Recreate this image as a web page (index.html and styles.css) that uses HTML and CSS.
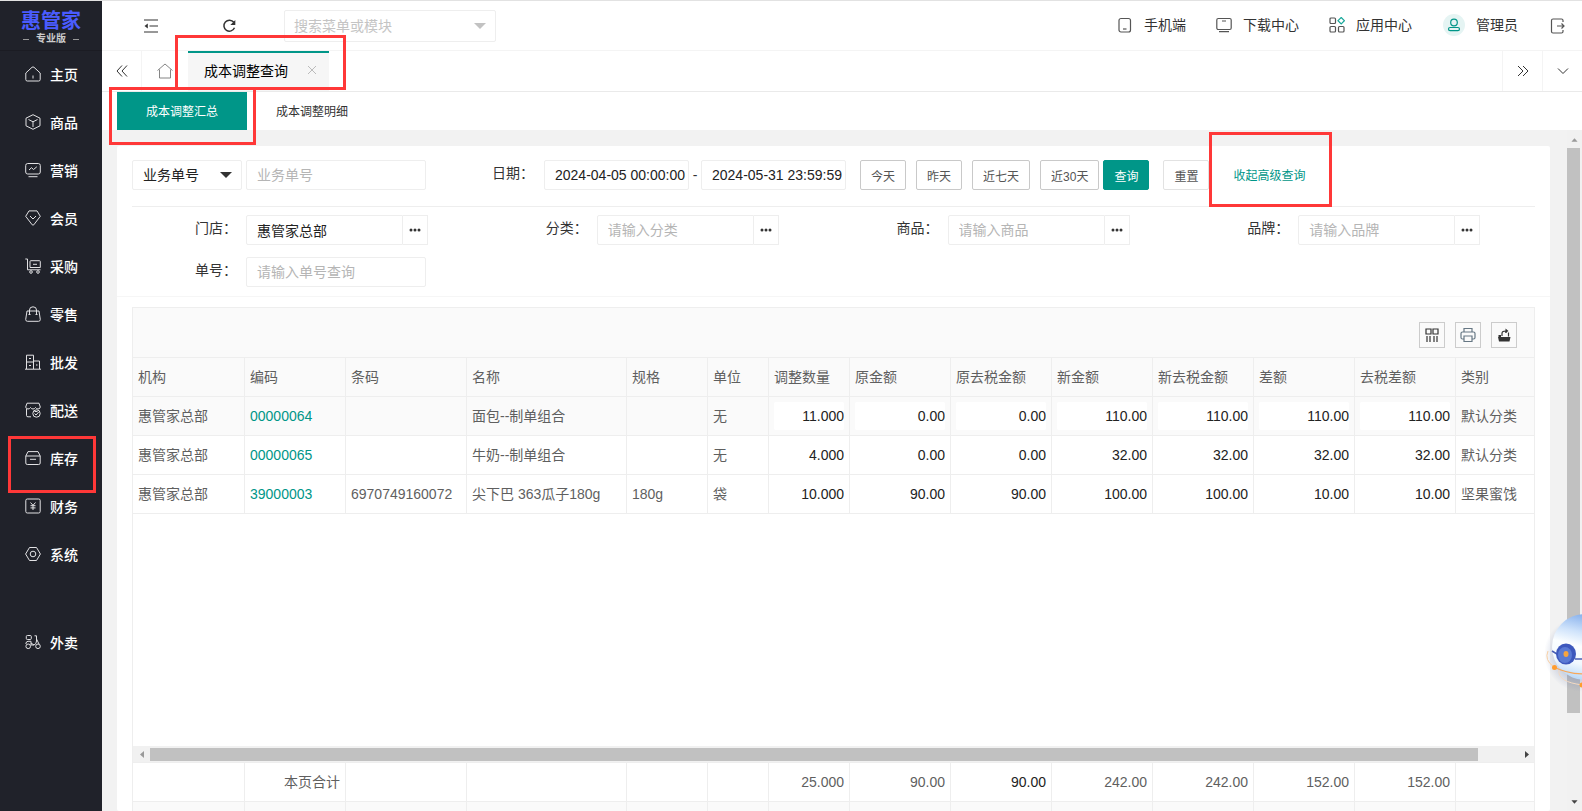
FILE: index.html
```html
<!DOCTYPE html>
<html lang="zh-CN">
<head>
<meta charset="utf-8">
<title>成本调整查询</title>
<link rel="stylesheet" href="styles.css">
</head>
<body>
<div class="app">
  <aside class="sidebar">
    <div class="logo">
      <div class="logo-name">惠管家</div>
      <div class="logo-edition"><i></i><span>专业版</span><i></i></div>
    </div>
    <nav class="menu">
      <a href="#"><svg viewBox="0 0 16 16"><path d="M.8 7 7 1.300Q8 .5 9 1.300L15.200 7V13.500Q15.200 15 13.700 15H2.300Q.8 15 .8 13.500ZM8 9.500V12.500"/></svg>主页</a>
      <a href="#"><svg viewBox="0 0 16 16"><path d="M8 .7 15 4.200V11.800L8 15.300 1 11.800V4.200ZM3.500 5.500 8 7.800 12.500 5.500M8 7.800V13"/></svg>商品</a>
      <a href="#"><svg viewBox="0 0 16 16"><rect x=".7" y="1.500" width="14.600" height="10.500" rx="2"/><path d="M4 8 6.500 5.700 8.500 7.500 11.800 4.800M3.500 14.700H12.500"/></svg>营销</a>
      <a href="#"><svg viewBox="0 0 16 16"><path d="M4 .9H12L15.300 6.300 8.800 14.800Q8 15.500 7.200 14.800L.7 6.300ZM5 6 8 9 11 6"/></svg>会员</a>
      <a href="#"><svg viewBox="0 0 16 16"><path d="M.3 1H2.500V11.800H15.500M5 3.500Q5 2.700 5.800 2.700H14.500Q15.300 2.700 15.300 3.500V9.500H5ZM8 6.300H12"/><circle cx="6" cy="14" r="1.300"/><circle cx="13" cy="14" r="1.300"/></svg>采购</a>
      <a href="#"><svg viewBox="0 0 16 16"><path d="M2 5H14L15.300 13.500Q15.300 15.300 13.500 15.300H2.500Q.7 15.300 .7 13.500ZM4.500 8.500V4Q4.500 .8 8 .8 11.500 .8 11.500 4V8.500M3.500 8.500H5.500M10.500 8.500H12.500"/></svg>零售</a>
      <a href="#"><svg viewBox="0 0 16 16"><path d="M1.500 15V1.200H8.500V15M8.500 7H14.500V15M0 15.200H16M4 4.500H6M1.500 8H8.500M4 11.500H6M11 11H12.500"/></svg>批发</a>
      <a href="#"><svg viewBox="0 0 16 16"><path d="M1.500 7V13.500Q1.500 14.800 3 14.800H6M14.500 7V6.500M2 1.200H14L15.300 5Q15 7 13 7 11.500 7 10.500 5.500 9.500 7 8 7 6.500 7 5.500 5.500 4.500 7 3 7 1 7 .7 5Z"/><circle cx="11.500" cy="11.500" r="3.700"/><path d="M9.500 11.500 11 13 13.700 10M9.500 9.500H12.500"/></svg>配送</a>
      <a href="#"><svg viewBox="0 0 16 16"><path d="M.8 6V13Q.8 14.500 2.300 14.500H13.700Q15.200 14.500 15.200 13V6ZM.8 6 3 1.600H13L15.200 6M5 9.300H11"/></svg>库存</a>
      <a href="#"><svg viewBox="0 0 16 16"><rect x=".8" y="1" width="14.400" height="14" rx="1.500"/><path d="M5.500 4.500 8 7.300 10.500 4.500M8 7.300V12M5.500 7.700H10.500M5.500 9.900H10.500"/></svg>财务</a>
      <a href="#"><svg viewBox="0 0 16 16"><path d="M4.500 1.500H11.500L15.400 8 11.500 14.500H4.500L.6 8Z"/><circle cx="8" cy="8" r="2.800"/></svg>系统</a>
      <a href="#" class="menu-apart"><svg viewBox="0 0 16 16"><rect x="1.300" y="1.500" width="5" height="4" rx="1"/><path d="M.8 10Q1 7.300 3 7.300H6V11H9Q11.500 10 11.500 7V1.800H9.500M6 9 9 11M11.500 5 14 10"/><circle cx="3.200" cy="12.300" r="2.300"/><circle cx="13" cy="12.300" r="2.300"/></svg>外卖</a>
    </nav>
  </aside>

  <div class="main">
    <header class="topbar">
      <button class="icon-btn top-fold" aria-label="折叠菜单"><svg class="ic dark" viewBox="0 0 16 16"><path d="M1 2H15M6.500 8H15M1 14H15"/><path class="solid" d="M4.800 5.500V10.500L1.500 8Z"/></svg></button>
      <button class="icon-btn top-refresh" aria-label="刷新"><svg class="ic dark" viewBox="0 0 16 16"><path stroke-width="1.500" d="M12.800 4.300A5.500 5.500 0 1 0 13.500 9.800"/><path class="solid" d="M14.300 2V7H9.300Z"/></svg></button>
      <div class="select-wrap search">
        <select aria-label="搜索菜单或模块"><option>搜索菜单或模块</option></select>
        <svg class="caret" viewBox="0 0 12 6"><path d="M0 0H12L6 6Z"/></svg>
      </div>
      <nav class="top-links">
        <a href="#"><svg class="ic" viewBox="0 0 16 16"><rect x="2" y="1.500" width="11.500" height="13.500" rx="2"/><path d="M6 12H9.500"/></svg>手机端</a>
        <a href="#"><svg class="ic" viewBox="0 0 16 16"><rect x=".8" y="1.500" width="14.400" height="11" rx="1.500"/><path d="M6 4H10M3 14.600H13"/></svg>下载中心</a>
        <a href="#"><svg class="ic" viewBox="0 0 16 16"><rect x="1" y="1" width="5.500" height="5.500" rx="1"/><rect x="1" y="9.500" width="5.500" height="5.500" rx="1"/><rect x="9.500" y="9.500" width="5.500" height="5.500" rx="1"/><path class="teal" d="M12.200 .5 15.400 3.700 12.200 6.900 9 3.700Z"/></svg>应用中心</a>
        <a href="#" class="user"><svg class="avatar" viewBox="0 0 22 22"><circle class="disc" cx="11" cy="11" r="11"/><circle cx="11" cy="8.500" r="3.300"/><rect x="5.500" y="13.500" width="11" height="3.200" rx="1.600"/></svg>管理员</a>
        <button class="icon-btn" aria-label="退出"><svg class="ic" viewBox="0 0 16 16"><path d="M13 4V2.500Q13 1 11.500 1H3Q1.500 1 1.500 2.500V13.500Q1.500 15 3 15H11.500Q13 15 13 13.500V12M7 8H13.500M11.500 5.500 14 8 11.500 10.500"/></svg></button>
      </nav>
    </header>

    <div class="tabs">
      <button class="tab-ctl tab-prev" aria-label="向左"><svg class="ic dark" viewBox="0 0 16 16"><path d="M8 2.500 3 8 8 13.500M13 2.500 8 8 13 13.500"/></svg></button>
      <button class="tab-home" aria-label="主页"><svg viewBox="0 0 16 16"><path d="M.5 7.500 8 1 15.500 7.500M2.500 6.500V15H13.500V6.500"/></svg></button>
      <div class="tab-active"><span>成本调整查询</span><button aria-label="关闭"><svg viewBox="0 0 10 10"><path d="M1 1 9 9M9 1 1 9"/></svg></button></div>
      <div class="spacer"></div>
      <button class="tab-ctl" aria-label="向右"><svg class="ic dark" viewBox="0 0 16 16"><path d="M3 3 8 8 3 13M8 3 13 8 8 13"/></svg></button>
      <button class="tab-ctl" aria-label="更多"><svg class="ic dark" viewBox="0 0 16 16"><path d="M3 5.500 8 10.500 13 5.500"/></svg></button>
    </div>

    <div class="subtabs">
      <button class="on">成本调整汇总</button>
      <button>成本调整明细</button>
    </div>

    <div class="body">
      <section class="card">
        <form class="filters">
          <div class="row-main">
            <div class="select-wrap kind">
              <select aria-label="查询类型"><option>业务单号</option></select>
              <svg class="caret" viewBox="0 0 12 6"><path d="M0 0H12L6 6Z"/></svg>
            </div>
            <input class="field bill" aria-label="业务单号" placeholder="业务单号">
            <label class="date-label" for="from">日期：</label>
            <input class="field date" id="from" value="2024-04-05 00:00:00">
            <span class="dash">-</span>
            <input class="field date" aria-label="结束日期" value="2024-05-31 23:59:59">
            <div class="quick">
              <button type="button">今天</button>
              <button type="button">昨天</button>
              <button type="button">近七天</button>
              <button type="button">近30天</button>
            </div>
            <button type="button" class="primary">查询</button>
            <button type="button" class="reset">重置</button>
            <a href="#" class="collapse">收起高级查询</a>
          </div>
          <div class="row-more">
            <div class="item"><label for="shop">门店：</label><input class="field" id="shop" value="惠管家总部"><button type="button" aria-label="选择门店"><svg viewBox="0 0 12 4"><circle cx="2" cy="2" r="1.500"/><circle cx="6" cy="2" r="1.500"/><circle cx="10" cy="2" r="1.500"/></svg></button></div>
            <div class="item"><label for="cat">分类：</label><input class="field" id="cat" placeholder="请输入分类"><button type="button" aria-label="选择分类"><svg viewBox="0 0 12 4"><circle cx="2" cy="2" r="1.500"/><circle cx="6" cy="2" r="1.500"/><circle cx="10" cy="2" r="1.500"/></svg></button></div>
            <div class="item"><label for="goods">商品：</label><input class="field" id="goods" placeholder="请输入商品"><button type="button" aria-label="选择商品"><svg viewBox="0 0 12 4"><circle cx="2" cy="2" r="1.500"/><circle cx="6" cy="2" r="1.500"/><circle cx="10" cy="2" r="1.500"/></svg></button></div>
            <div class="item"><label for="brand">品牌：</label><input class="field" id="brand" placeholder="请输入品牌"><button type="button" aria-label="选择品牌"><svg viewBox="0 0 12 4"><circle cx="2" cy="2" r="1.500"/><circle cx="6" cy="2" r="1.500"/><circle cx="10" cy="2" r="1.500"/></svg></button></div>
            <div class="item"><label for="no">单号：</label><input class="field bill" id="no" placeholder="请输入单号查询"></div>
          </div>
        </form>

        <div class="grid">
          <div class="toolbar">
            <button aria-label="筛选列"><svg class="ic dark" viewBox="0 0 16 16"><path d="M2 2H7V7H2ZM9 2H14V7H9ZM3 9V15M6 9V15M10 9V15M13 9V15"/></svg></button>
            <button aria-label="打印"><svg class="ic print" viewBox="0 0 16 16"><path d="M4 5V1.500H12V5M4 12H2.500Q1 12 1 10.500V6.500Q1 5 2.500 5H13.500Q15 5 15 6.500V10.500Q15 12 13.500 12H12M4 9H12V14.500H4Z"/></svg></button>
            <button aria-label="导出"><svg class="ic dark" viewBox="0 0 16 16"><path d="M6 9V6.500Q6 4 10 4V6M12.500 5.500V9.500"/><path class="solid" d="M9.500 1.500 12.500 4 9.500 6ZM2 10H14.500L13.500 14.500H3ZM2.500 8H5V10H2.500Z"/></svg></button>
          </div>
          <table>
            <colgroup><col class="w112"><col class="w101"><col class="w121"><col class="w160"><col class="w81"><col class="w61"><col class="w81"><col class="w101"><col class="w101"><col class="w101"><col class="w101"><col class="w101"><col class="w101"><col></colgroup>
            <thead>
              <tr><th>机构</th><th>编码</th><th>条码</th><th>名称</th><th>规格</th><th>单位</th><th>调整数量</th><th>原金额</th><th>原去税金额</th><th>新金额</th><th>新去税金额</th><th>差额</th><th>去税差额</th><th>类别</th></tr>
            </thead>
            <tbody>
              <tr class="hover"><td>惠管家总部</td><td><a href="#">00000064</a></td><td></td><td>面包--制单组合</td><td></td><td>无</td><td><input aria-label="调整数量" value="11.000"></td><td><input aria-label="原金额" value="0.00"></td><td><input aria-label="原去税金额" value="0.00"></td><td><input aria-label="新金额" value="110.00"></td><td><input aria-label="新去税金额" value="110.00"></td><td><input aria-label="差额" value="110.00"></td><td><input aria-label="去税差额" value="110.00"></td><td>默认分类</td></tr>
              <tr><td>惠管家总部</td><td><a href="#">00000065</a></td><td></td><td>牛奶--制单组合</td><td></td><td>无</td><td><input aria-label="调整数量" value="4.000"></td><td><input aria-label="原金额" value="0.00"></td><td><input aria-label="原去税金额" value="0.00"></td><td><input aria-label="新金额" value="32.00"></td><td><input aria-label="新去税金额" value="32.00"></td><td><input aria-label="差额" value="32.00"></td><td><input aria-label="去税差额" value="32.00"></td><td>默认分类</td></tr>
              <tr><td>惠管家总部</td><td><a href="#">39000003</a></td><td>6970749160072</td><td>尖下巴 363瓜子180g</td><td>180g</td><td>袋</td><td><input aria-label="调整数量" value="10.000"></td><td><input aria-label="原金额" value="90.00"></td><td><input aria-label="原去税金额" value="90.00"></td><td><input aria-label="新金额" value="100.00"></td><td><input aria-label="新去税金额" value="100.00"></td><td><input aria-label="差额" value="10.00"></td><td><input aria-label="去税差额" value="10.00"></td><td>坚果蜜饯</td></tr>
            </tbody>
          </table>
          <div class="blank"></div>
          <div class="hscroll">
            <svg class="off" viewBox="0 0 17 17"><path d="M11 5V12L7 8.500Z"/></svg>
            <div class="hthumb"></div>
            <svg viewBox="0 0 17 17"><path d="M8 5V12L12 8.500Z"/></svg>
          </div>
          <table class="totals">
            <colgroup><col class="w112"><col class="w101"><col class="w121"><col class="w160"><col class="w81"><col class="w61"><col class="w81"><col class="w101"><col class="w101"><col class="w101"><col class="w101"><col class="w101"><col class="w101"><col></colgroup>
            <tbody>
              <tr><td></td><td>本页合计</td><td></td><td></td><td></td><td></td><td>25.000</td><td>90.00</td><td class="strong">90.00</td><td>242.00</td><td>242.00</td><td>152.00</td><td>152.00</td><td></td></tr>
              <tr class="next"><td></td><td></td><td></td><td></td><td></td><td></td><td></td><td></td><td></td><td></td><td></td><td></td><td></td><td></td></tr>
            </tbody>
          </table>
        </div>
      </section>
      <div class="vscroll">
        <svg class="off" viewBox="0 0 17 17"><path d="M5 11H12L8.500 7Z"/></svg>
        <div class="vthumb"></div>
        <svg viewBox="0 0 17 17"><path d="M5 6H12L8.500 10Z"/></svg>
      </div>
    </div>
  </div>
</div>

<svg class="robot" viewBox="0 0 37 84">
  <defs>
    <linearGradient id="shell" x1=".6" y1="0" x2=".35" y2="1"><stop offset="0" stop-color="#7eaaea"/><stop offset=".3" stop-color="#cfe3fb"/><stop offset=".5" stop-color="#fbfeff"/><stop offset=".75" stop-color="#f2f9ff"/><stop offset="1" stop-color="#b5d6f7"/></linearGradient>
    <radialGradient id="shade"><stop offset=".6" stop-color="#6c7fb0" stop-opacity=".35"/><stop offset="1" stop-color="#6c7fb0" stop-opacity="0"/></radialGradient>
  </defs>
  <ellipse cx="37" cy="44" rx="38" ry="38" fill="url(#shade)"/>
  <circle cx="40" cy="37" r="33" fill="url(#shell)"/>
  <path d="M7 41 12 44M30 49H40" stroke="#4a5fb5" stroke-width="1.500" fill="none"/>
  <ellipse cx="21" cy="44" rx="10" ry="10.500" fill="#3d58bd"/>
  <ellipse cx="20" cy="45" rx="7" ry="8" fill="#5a7ad4"/>
  <ellipse cx="21" cy="44" rx="2.500" ry="3" fill="#f7a440"/>
  <path d="M3 41Q-1 50 9 57" stroke="#f8cfa3" stroke-width="1" fill="none"/>
  <path d="M9 57Q22 64 40 64" stroke="#f7a85a" stroke-width="1.200" fill="none"/>
  <path d="M14 60Q12 72 38 75" stroke="#f3dac3" stroke-width="1" fill="none"/>
  <circle cx="9.500" cy="57.500" r="2.500" fill="#ff9c2e"/>
  <circle cx="37" cy="75" r="2.500" fill="#ff9c2e"/>
</svg>
<div class="mark mark-tab"></div>
<div class="mark mark-subtab"></div>
<div class="mark mark-stock"></div>
<div class="mark mark-collapse"></div>
</body>
</html>
```

FILE: styles.css
```css
* { box-sizing: border-box; }
body, button, input, select {
  font-family: "Liberation Sans", "Noto Sans CJK SC", sans-serif;
  font-size: 14px;
}
body {
  margin: 0;
  height: 100vh;
  overflow: hidden;
  color: #333;
  background: #f2f2f2;
}
a { color: inherit; text-decoration: none; }
button { margin: 0; padding: 0; border: 0; background: none; color: inherit; }
input, select { margin: 0; outline: 0; }
svg { display: block; flex: none; fill: none; stroke: currentColor; }

.app { display: flex; height: 100vh; border-top: 1px solid #e2e2e2; }

/* sidebar */
.sidebar { flex: none; width: 102px; background: #20222a; color: #fff; }
.logo { height: 50px; padding-top: 8px; border-bottom: 1px solid #1b1c23; }
.logo-name { color: #4a5cff; font-size: 20px; font-weight: bold; line-height: 24px; text-align: center; }
.logo-edition { display: flex; align-items: center; justify-content: center; gap: 7px; color: #ccc; font-size: 10px; font-weight: bold; line-height: 12px; }
.logo-edition i { width: 6px; height: 1px; background: #999; }
.menu a { display: flex; align-items: center; gap: 9px; height: 48px; padding: 0 0 2px 25px; font-weight: 500; }
.menu svg { width: 16px; height: 16px; color: #e2e2e4; }
.menu .menu-apart { margin-top: 40px; }

/* top bar */
.main { flex: 1; min-width: 0; display: flex; flex-direction: column; }
.topbar { flex: none; display: flex; align-items: center; height: 50px; background: #fff; border-bottom: 1px solid #f4f4f4; }
.ic { width: 16px; height: 16px; color: #555; stroke-width: 1.2; }
.dark { color: #333; }
.solid { fill: currentColor; stroke: none; }
.teal { stroke: #17a79a; }
.top-fold { margin-left: 41px; }
.top-refresh { margin-left: 62px; }
.select-wrap { position: relative; flex: none; }
.select-wrap select { appearance: none; width: 100%; height: 100%; padding: 0 10px; border: 1px solid #eee; border-radius: 2px; background: #fff; color: #222; }
.caret { position: absolute; top: 50%; right: 10px; width: 12px; height: 6px; margin-top: -3px; fill: #333; stroke: none; pointer-events: none; }
.search { width: 212px; height: 32px; margin-left: 47px; }
.search select { padding: 0 9px; color: #c4c4c4; }
.search .caret { fill: #c2c2c2; }
.top-links { display: flex; align-items: center; margin-left: auto; padding-right: 16px; gap: 30px; }
.top-links a { display: flex; align-items: center; gap: 11px; line-height: 20px; padding-bottom: 1px; }
.avatar { width: 22px; height: 22px; color: #009688; stroke-width: 1.2; }
.disc { fill: #e5f4f3; stroke: none; }
.top-links .user { margin: 0 2px 0 1px; }

/* page tabs */
.tabs { flex: none; display: flex; height: 40px; background: #fff; }
.tab-ctl { display: grid; place-items: center; width: 40px; padding-bottom: 1px; border-left: 1px solid #f4f4f4; }
.tab-ctl .ic { stroke-width: 1; }
.tab-prev { border-left: 0; border-right: 1px solid #f4f4f4; }
.tab-home { display: grid; place-items: center; width: 46px; color: #777; }
.tab-home svg { width: 16px; height: 16px; stroke-width: .9; }
.tab-active { display: flex; align-items: center; gap: 19px; width: 141px; padding: 0 0 4px 16px; border-top: 2px solid #009688; background: #f6f6f6; color: #000; }
.tab-active svg { width: 10px; height: 10px; color: #bbb; }
.spacer { flex: 1; }

.subtabs { flex: none; display: flex; height: 39px; padding: 0 15px; background: #fff; border-top: 1px solid #eaeaea; }
.subtabs button { width: 130px; padding-bottom: 2px; font-size: 12px; }
.subtabs .on { background: #009688; color: #fff; }

/* content */
.body { flex: 1; min-height: 0; display: flex; gap: 17px; padding-left: 15px; }
.card { flex: 1; min-width: 0; display: flex; flex-direction: column; margin-top: 16px; background: #fff; border-radius: 2px; }
.filters { flex: none; padding: 14px 15px 9px; border-bottom: 1px solid #f6f6f6; }
.row-main { display: flex; align-items: center; padding-bottom: 16px; border-bottom: 1px solid #eee; }
.kind { width: 110px; height: 30px; }
.field { flex: none; height: 30px; padding: 0 10px; border: 1px solid #eee; border-radius: 2px; background: #fff; color: #222; }
.field::placeholder { color: #b5b5b5; }
.bill { width: 180px; }
.row-main .bill { margin-left: 4px; }
.date-label { width: 118px; padding-left: 66px; padding-bottom: 6px; white-space: nowrap; }
.date { width: 145px; padding-right: 0; }
.dash { width: 12px; text-align: center; }
.quick { display: flex; gap: 10px; margin-left: 14px; }
.row-main button { height: 30px; padding: 0 10px; border: 1px solid #c9c9c9; border-radius: 2px; background: #fff; color: #555; font-size: 12px; white-space: nowrap; }
.row-main .primary { margin-left: 4px; border-color: #009688; background: #009688; color: #fff; }
.row-main .reset { margin-left: 14px; border-color: #e2e2e2; }
.collapse { margin-left: 24px; padding-bottom: 2px; color: #009688; font-size: 12px; white-space: nowrap; }
.row-more { display: grid; grid-template-columns: repeat(4, 1fr); gap: 12px 0; padding-top: 8px; }
.item { display: flex; align-items: center; }
.item label { flex: none; width: 114px; padding: 0 9px 6px 0; text-align: right; }
.item .field:not(.bill) { width: 157px; border-radius: 2px 0 0 2px; }
.item button { display: grid; place-items: center; width: 25px; height: 30px; border: 1px solid #eee; border-left: 0; }
.item button svg { width: 12px; height: 4px; fill: #333; stroke: none; }

/* data grid */
.grid { flex: 1; min-height: 0; display: flex; flex-direction: column; margin: 10px 15px 0; border: 1px solid #eee; border-bottom: 0; overflow: hidden; }
.toolbar { flex: none; display: flex; align-items: center; justify-content: flex-end; gap: 10px; height: 50px; padding: 5px 17px 0 0; background: #fafafa; border-bottom: 1px solid #eee; }
.toolbar button { display: grid; place-items: center; width: 26px; height: 26px; border: 1px solid #ccc; }
.toolbar .print { color: #667784; }
table { flex: none; width: 100%; table-layout: fixed; border-collapse: separate; border-spacing: 0; color: #5f5f5f; }
th, td { height: 39px; padding: 0 5px; border-right: 1px solid #eee; border-bottom: 1px solid #eee; font-weight: normal; text-align: left; white-space: nowrap; line-height: 20px; }
th:last-child, td:last-child { border-right: 0; }
thead th, .hover td { background: #fafafa; }
td a { color: #009688; }
td input { display: block; width: 100%; height: 28px; padding: 0; border: 0; border-radius: 2px; background: #fff; color: #222; text-align: right; }
.w61 { width: 61px; }
.w81 { width: 81px; }
.w101 { width: 101px; }
.w112 { width: 112px; }
.w121 { width: 121px; }
.w160 { width: 160px; }
.blank { flex: 1; min-height: 0; }
.totals { height: 48px; }
.totals td { text-align: right; }
.totals .strong { color: #222; }
.totals .next td { height: 9px; background: #fafafa; border-bottom: 0; }

/* scroll bars */
.hscroll { flex: none; display: flex; align-items: center; height: 17px; background: #f1f1f1; border-bottom: 1px solid #eee; }
.hscroll svg, .vscroll svg { width: 17px; height: 17px; fill: #444; stroke: none; }
.hscroll .off, .vscroll .off { fill: #9a9a9a; }
.hthumb { flex: 1; height: 13px; margin-right: 39px; background: #c1c1c1; }
.vscroll { flex: none; display: flex; flex-direction: column; width: 15px; padding-top: 1px; background: #f1f1f1; }
.vscroll svg { width: 15px; }
.vthumb { flex: 1; width: 13px; margin-bottom: 81px; background: #c1c1c1; }

/* floating assistant and highlight frames */
.robot { position: absolute; right: 0; top: 610px; width: 37px; height: 84px; stroke: none; }
.mark { position: absolute; border: 3px solid #ff3838; pointer-events: none; }
.mark-tab { left: 175px; top: 35px; width: 171px; height: 55px; }
.mark-subtab { left: 109px; top: 87px; width: 147px; height: 58px; }
.mark-stock { left: 8px; top: 436px; width: 88px; height: 57px; }
.mark-collapse { left: 1209px; top: 132px; width: 123px; height: 75px; }
```
